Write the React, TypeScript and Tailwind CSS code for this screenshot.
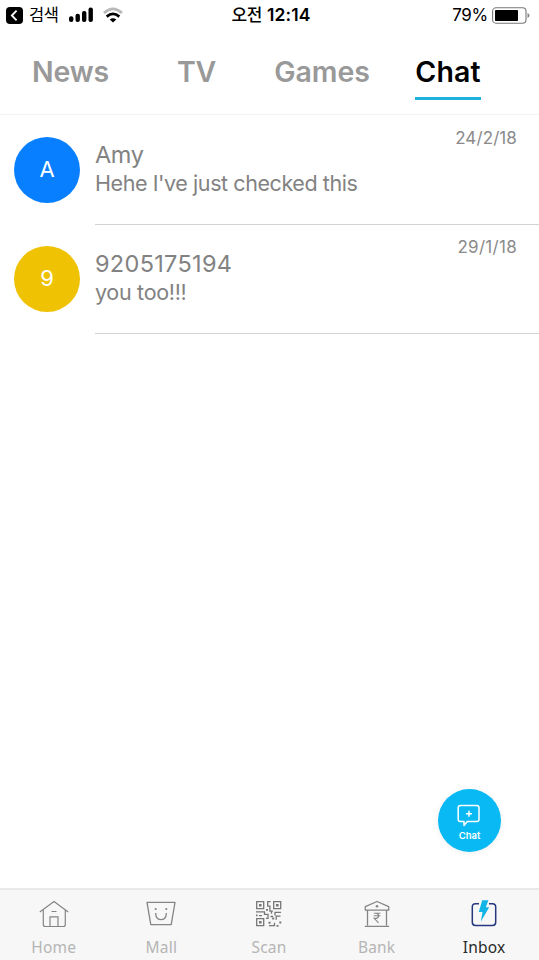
import React, { useState } from "react";

const tabs = [
  { label: "News", className: "ml-[32px] w-[77px] tracking-[-0.1px]" },
  { label: "TV", className: "ml-[68px] w-[39px] tracking-[-0.3px]" },
  { label: "Games", className: "ml-[57px] w-[98px] tracking-[-0.05px]" },
  { label: "Chat", className: "ml-[44px] w-[66px] tracking-[0.1px]" },
];

const chats = [
  { id: 1, initial: "A", name: "Amy", message: "Hehe I've just checked this", date: "24/2/18", color: "bg-[#087fff]", rowClass: "h-[110px]", nameClass: "tracking-[-0.4px]", messageClass: "tracking-[-0.42px]", dateClass: "tracking-[0.1px]" },
  { id: 2, initial: "9", name: "9205175194", message: "you too!!!", date: "29/1/18", color: "bg-[#efc204]", rowClass: "-mt-px h-[110px]", nameClass: "tracking-[0.3px]", messageClass: "tracking-[-0.3px]", dateClass: "tracking-[0.3px]" },
];

function StatusBar() {
  return (
    <div className="flex h-[30px] shrink-0 items-center justify-between pl-[6px] pr-[9px] text-black">
      <div className="flex w-[226px] items-center">
        <svg width="17" height="17" viewBox="0 0 17 17">
          <rect width="17" height="17" rx="4" fill="#000" />
          <path d="M10.6 3.6 5.8 8.5l4.8 4.9" fill="none" stroke="#fff" strokeWidth="1.8" />
        </svg>
        <span className="ml-[6px] w-[30px] whitespace-nowrap text-[16.5px] leading-[24px] tracking-[-0.5px]">검색</span>
        <svg className="ml-[10px]" width="25" height="16" viewBox="0 0 25 16">
          <rect x="0" y="9.2" width="4.4" height="5.8" rx="2" />
          <rect x="6.5" y="6.7" width="4.4" height="8.3" rx="2" />
          <rect x="13" y="4" width="4.4" height="11" rx="2" />
          <rect x="19.5" y="0.5" width="4.4" height="14.5" rx="2" />
        </svg>
        <svg className="ml-[9px]" width="20" height="16" viewBox="0 0 20 16" fill="none">
          <path d="M1 6Q10-2.2 19 6" stroke="#b9b9b9" strokeWidth="2.8" />
          <path d="M3.7 9.6Q10 4.2 16.3 9.6" stroke="#000" strokeWidth="2.8" />
          <path d="M6.7 12.6Q10 10 13.3 12.6L10 15.6z" fill="#000" />
        </svg>
      </div>
      <div className="flex whitespace-nowrap text-[17px] font-semibold leading-[24px]">
        <span className="font-medium tracking-[-0.4px]">오전</span>
        <span className="ml-[5px] text-[17.5px] tracking-[0.1px]">12:14</span>
      </div>
      <div className="flex w-[220px] items-center justify-end">
        <span className="whitespace-nowrap text-[17px] leading-[24px] tracking-[-0.3px]">79%</span>
        <svg className="ml-[4px]" width="38" height="17" viewBox="0 0 38 17">
          <rect x="0.6" y="0.8" width="33.4" height="15.4" rx="3.4" fill="#fff" stroke="#777" strokeWidth="1.1" />
          <rect x="3" y="3" width="23" height="11" rx="0.8" />
          <path d="M35.5 6q2 .7 2 2.5t-2 2.5z" fill="#888" />
        </svg>
      </div>
    </div>
  );
}

function HomeIcon() {
  return (
    <svg width="30" height="28" viewBox="0 0 30 28" fill="none" stroke="#858585" strokeWidth="1.2">
      <path d="M.8 12 15 1.5 29.2 12" />
      <path d="M4.3 9.8v14.7q0 2 2 2h18q2 0 2-2V9.8" />
      <path d="M11 26.5v-9.7h8v9.7M12.5 11.5h5" />
    </svg>
  );
}

function MallIcon() {
  return (
    <svg width="30" height="28" viewBox="0 0 30 28" fill="none" stroke="#858585" strokeWidth="1.3">
      <path d="M1 2.4h28l-3.8 22.3H4.8z" strokeLinejoin="round" />
      <path d="M9.8 13v1.5a5.2 5.2 0 0 0 10.4 0V13" />
      <circle cx="9.7" cy="9" r="1.1" fill="#858585" stroke="none" />
      <circle cx="20.3" cy="9" r="1.1" fill="#858585" stroke="none" />
    </svg>
  );
}

function ScanIcon() {
  return (
    <svg width="28" height="28" viewBox="0 0 28 28" fill="none" stroke="#777" strokeWidth="1.3">
      <path d="M1.7 1.7h7v7h-7zM18.7 1.7h7v7h-7zM1.7 18.7h7v7h-7z" />
      <path d="M4 4h2.6v2.6H4zM21 4h2.6v2.6H21zM4 21h2.6v2.6H4z" fill="#777" stroke="none" />
      <path d="M15.7 1.7h-3v4.5h2.2v5h3M1 11.9h8.5v2.5H13v4h-2M4 15.6h3M16.5 13.7v-2M20 15.5v-3.2h6M25.5 16.2h-4.3v3.5M15.5 16.5h2.6M14 25.7h5.5v-3" />
      <path d="M11 9h2v1.7h-2zM1 14.5h1.6v1.7H1zM17.2 17.5h2v2h-2zM24.3 21.5h2v2h-2zM21.5 25h2v1.7h-2zM13.5 21.7h2v2h-2z" fill="#777" stroke="none" />
    </svg>
  );
}

function BankIcon() {
  return (
    <svg width="26" height="28" viewBox="0 0 26 28" fill="none" stroke="#858585" strokeWidth="1.3">
      <path d="M1.3 10.2V6.7L13 1.5l11.7 5.2v3.5zM3.5 10.5v15M22.5 10.5v15M.8 26.4h24.4" strokeLinejoin="round" />
      <circle cx="13" cy="6.2" r="1.3" fill="#858585" stroke="none" />
      <path d="M9.8 13.2h6.6M9.8 15.8h6.6M9.8 13.2h2c3.6 0 3.6 5.2 0 5.2h-1.6l4.4 4.4" strokeWidth="1.1" />
    </svg>
  );
}

function InboxIcon() {
  return (
    <svg width="26" height="28" viewBox="0 0 26 28" fill="none">
      <path d="M8 3.7H4.5Q1.3 3.7 1.3 7v15.2q0 3.2 3.2 3.2h17q3.2 0 3.2-3.2V7q0-3.3-3.2-3.3H18" stroke="#26377e" strokeWidth="1.5" />
      <path d="M11.2.2h6.2l-2.6 7.1h3.4L9.8 21.7l1.7-9.7H7.8z" fill="#12b5e5" />
    </svg>
  );
}

const navItems = [
  { label: "Home", icon: <HomeIcon /> },
  { label: "Mall", icon: <MallIcon /> },
  { label: "Scan", icon: <ScanIcon /> },
  { label: "Bank", icon: <BankIcon /> },
  { label: "Inbox", icon: <InboxIcon /> },
];

export default function App() {
  const [activeTab, setActiveTab] = useState("Chat");
  const [activeNav, setActiveNav] = useState("Inbox");

  return (
    <div className="relative flex h-[960px] w-[539px] flex-col overflow-hidden bg-white font-['Inter','Noto_Sans_CJK_KR',sans-serif]">
      <StatusBar />

      {/* Category tabs */}
      <div className="flex h-[85px] shrink-0 items-start border-b border-[#f3f3f3] pt-[23px]">
        {tabs.map((tab) => (
          <button
            key={tab.label}
            onClick={() => setActiveTab(tab.label)}
            className={`flex h-[47px] shrink-0 justify-center whitespace-nowrap border-b-[3px] text-[28.5px] font-semibold leading-[37px] ${tab.className} ${
              activeTab === tab.label ? "border-[#20b2de] text-black" : "border-transparent text-[#999]"
            }`}
          >
            {tab.label}
          </button>
        ))}
      </div>

      {/* Conversations */}
      <div className="flex-1">
        {chats.map((chat) => (
          <div key={chat.id} className={`flex pl-[14px] ${chat.rowClass}`}>
            <div className={`mt-[22px] flex size-[66px] shrink-0 items-center justify-center rounded-full pb-[1px] text-[22px] text-white ${chat.color}`}>
              {chat.initial}
            </div>
            <div className="ml-[15px] flex flex-1 justify-between border-b border-[#d2d2d2] pr-[22px] text-[#828282]">
              <div className="pt-[26px]">
                <div className={`whitespace-nowrap text-[23.5px] leading-[28px] ${chat.nameClass}`}>{chat.name}</div>
                <div className={`whitespace-nowrap text-[21.5px] leading-[28px] ${chat.messageClass}`}>{chat.message}</div>
              </div>
              <div className={`whitespace-nowrap pt-[13px] text-[17px] leading-[21px] text-[#8a8a8a] ${chat.dateClass}`}>{chat.date}</div>
            </div>
          </div>
        ))}
      </div>

      <button className="absolute left-[438px] top-[789px] flex size-[63px] flex-col items-center rounded-full bg-[#08b9f3] pt-[15px] text-white shadow-[0_1px_6px_rgba(0,0,0,0.07)]">
        <svg className="mr-[1px]" width="24" height="23" viewBox="0 0 24 23" fill="none" stroke="#fff" strokeWidth="1.5">
          <path d="M3.5 1.5h16.2q2.3 0 2.3 2.3v11.5q0 2.3-2.3 2.3h-9.4L7 21.5v-3.9H3.5q-2.3 0-2.3-2.3V3.8q0-2.3 2.3-2.3z" strokeLinejoin="round" />
          <path d="M12 6.7v6M9 9.7h6" />
        </svg>
        <span className="mt-[3px] text-[9.5px] font-semibold leading-[12px]">Chat</span>
      </button>

      {/* Bottom navigation */}
      <div className="grid h-[72px] shrink-0 grid-cols-5 border-t-2 border-[#e9e9e9] bg-[#f7f7f7] pr-[1px]">
        {navItems.map((item) => (
          <button
            key={item.label}
            onClick={() => setActiveNav(item.label)}
            className={`flex flex-col items-center pt-[10px] font-['Noto_Sans',sans-serif] text-[15.5px] leading-[22px] tracking-[0.2px] ${
              activeNav === item.label ? "text-[#292929]" : "text-[#b5b5b5]"
            }`}
          >
            {item.icon}
            <span className="mt-[8px]">{item.label}</span>
          </button>
        ))}
      </div>
    </div>
  );
}
